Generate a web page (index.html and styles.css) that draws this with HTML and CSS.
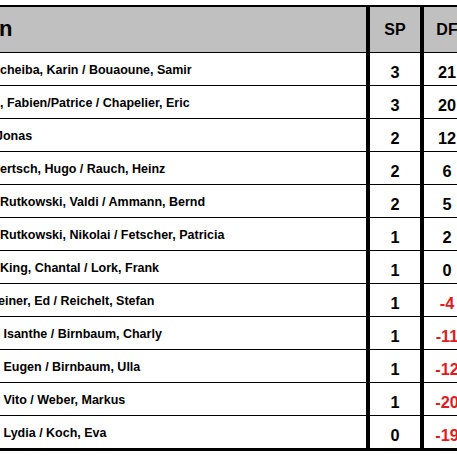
FILE: index.html
```html
<!DOCTYPE html>
<html lang="de">
<head>
<meta charset="utf-8">
<title>Tabelle</title>
<link rel="stylesheet" href="styles.css">
</head>
<body>
<div class="sheet">
  <div class="row head">
    <div class="name"><span class="head-n">n</span></div>
    <div class="num sp">SP</div>
    <div class="num df">DF</div>
  </div>
  <div class="row"><div class="name">cheiba, Karin / Bouaoune, Samir</div><div class="num sp">3</div><div class="num df">21</div></div>
  <div class="row"><div class="name">, Fabien/Patrice / Chapelier, Eric</div><div class="num sp">3</div><div class="num df">20</div></div>
  <div class="row"><div class="name"><span class="cut">Jonas</span></div><div class="num sp">2</div><div class="num df">12</div></div>
  <div class="row"><div class="name">ertsch, Hugo / Rauch, Heinz</div><div class="num sp">2</div><div class="num df">6</div></div>
  <div class="row"><div class="name">Rutkowski, Valdi / Ammann, Bernd</div><div class="num sp">2</div><div class="num df">5</div></div>
  <div class="row"><div class="name">Rutkowski, Nikolai / Fetscher, Patricia</div><div class="num sp">1</div><div class="num df">2</div></div>
  <div class="row"><div class="name">King, Chantal / Lork, Frank</div><div class="num sp">1</div><div class="num df">0</div></div>
  <div class="row"><div class="name"><span class="cut-s">einer, Ed / Reichelt, Stefan</span></div><div class="num sp">1</div><div class="num df neg">-4</div></div>
  <div class="row"><div class="name">&nbsp;Isanthe / Birnbaum, Charly</div><div class="num sp">1</div><div class="num df neg">-11</div></div>
  <div class="row"><div class="name">&nbsp;Eugen / Birnbaum, Ulla</div><div class="num sp">1</div><div class="num df neg">-12</div></div>
  <div class="row"><div class="name">&nbsp;Vito / Weber, Markus</div><div class="num sp">1</div><div class="num df neg">-20</div></div>
  <div class="row last"><div class="name">&nbsp;Lydia / Koch, Eva</div><div class="num sp">0</div><div class="num df neg">-19</div></div>
</div>
</body>
</html>
```

FILE: styles.css
```css
html, body {
  margin: 0;
  padding: 0;
  background: #ffffff;
  overflow: hidden;
  width: 457px;
  height: 457px;
}

.sheet {
  margin-top: 5px;
  width: 470px;
  border-top: 2px solid #000;
  font-family: "Liberation Sans", Arial, sans-serif;
  font-weight: bold;
  color: #000;
}

.row {
  display: flex;
  height: 32px;
  border-bottom: 1px solid #000;
}

.row.head {
  height: 45px;
  background: #c0c0c0;
}

.row.last {
  border-bottom: 3px solid #000;
}

.name {
  width: 366px;
  flex: none;
  display: flex;
  align-items: center;
  font-size: 12.5px;
  white-space: nowrap;
  overflow: hidden;
  padding-top: 1px;
  box-sizing: border-box;
}

.head-n {
  font-size: 22px;
  margin-left: -1px;
  padding-bottom: 2px;
}

.cut {
  margin-left: -4px;
}

.cut-s {
  margin-left: -2px;
}

.num {
  flex: none;
  display: flex;
  align-items: center;
  justify-content: center;
  border-left: 4px solid #000;
  font-size: 16.3px;
  padding-top: 6px;
  box-sizing: border-box;
}

.head .num {
  padding-top: 0;
  font-size: 16px;
}

.sp {
  width: 54px;
}

.df {
  width: 50px;
}

.neg {
  color: #e01b22;
}
```
